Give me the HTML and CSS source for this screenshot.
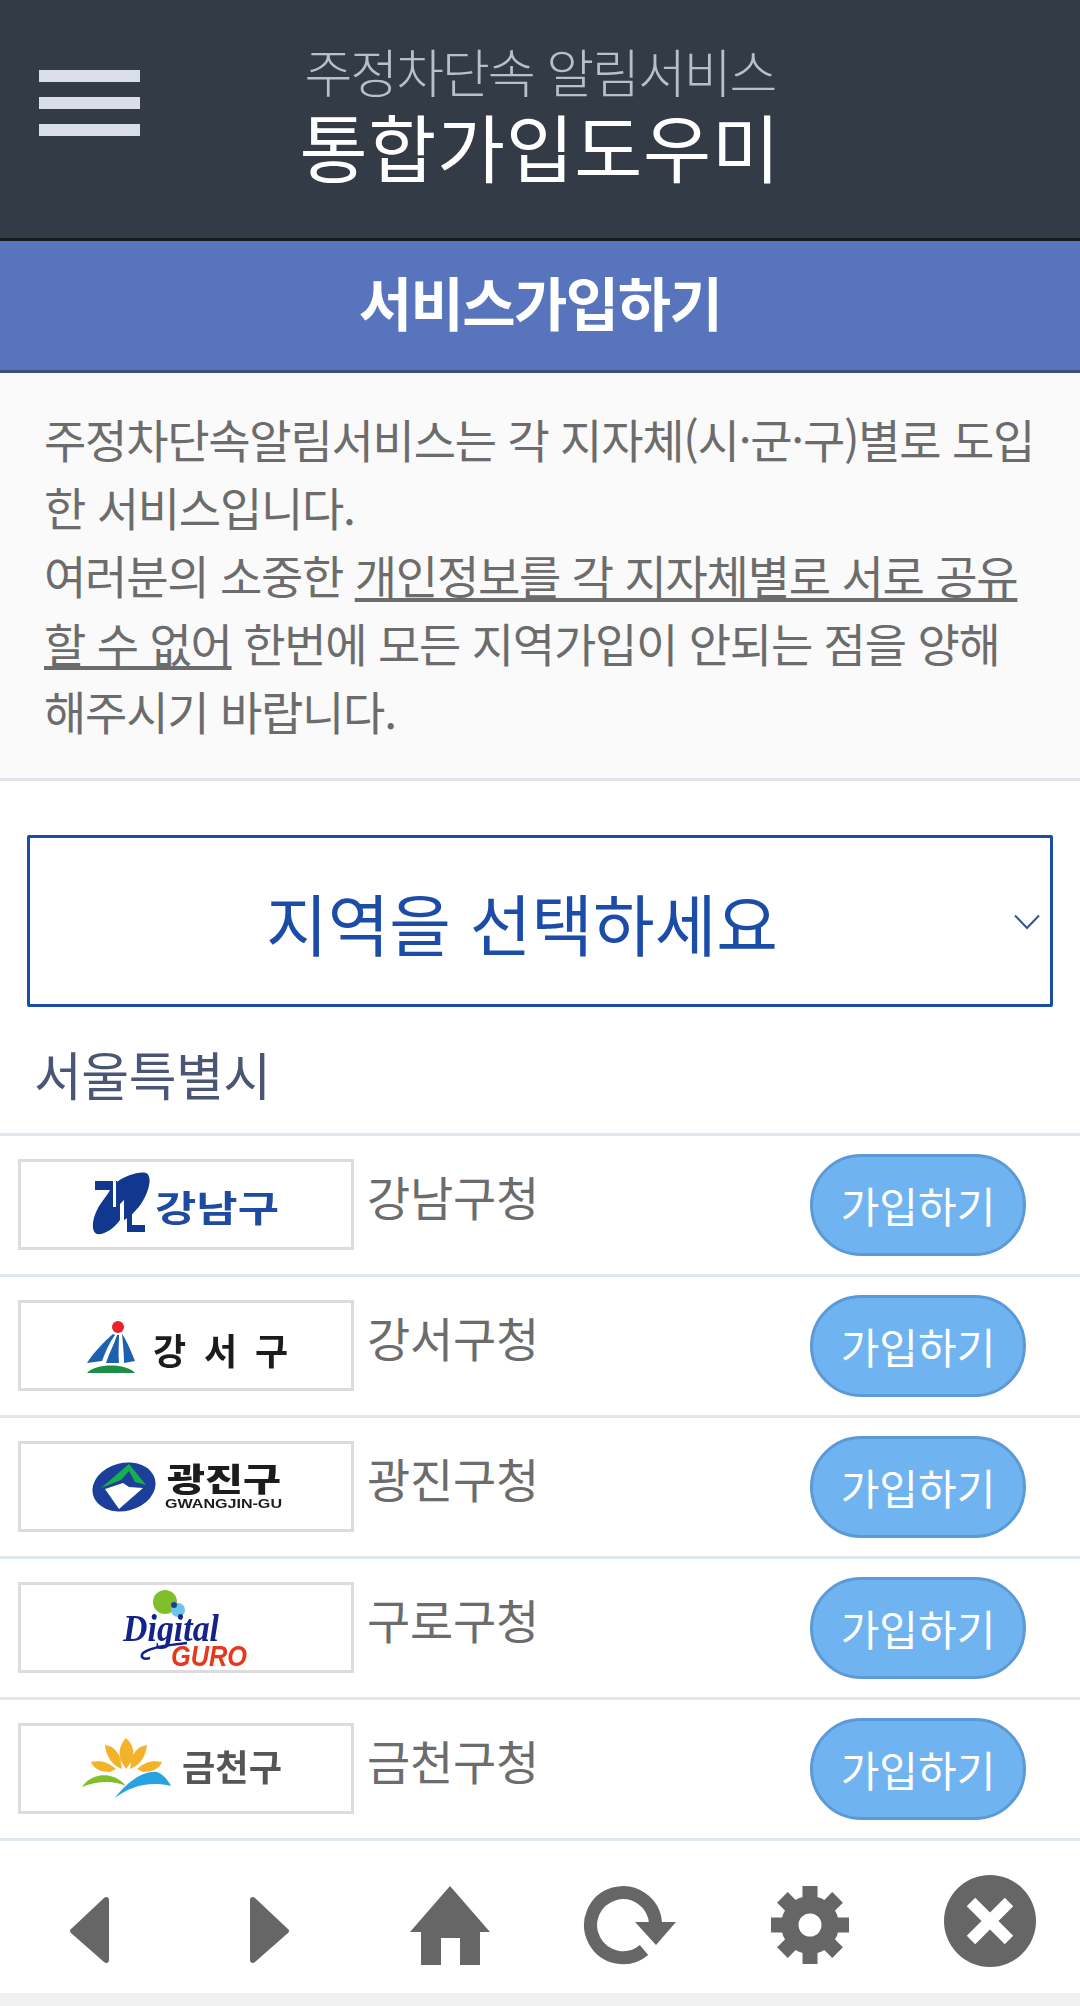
FILE: index.html
```html
<!DOCTYPE html>
<html lang="ko">
<head>
<meta charset="utf-8">
<title>통합가입도우미</title>
<link rel="stylesheet" href="styles.css">
</head>
<body>
<div class="page">
  <header class="top">
    <div class="burger"><i></i><i></i><i></i></div>
    <div class="brand">
      <div class="brand-sub">주정차단속 알림서비스</div>
      <div class="brand-main">통합가입도우미</div>
    </div>
  </header>
  <h1 class="bar">서비스가입하기</h1>
  <section class="intro">주정차단속알림서비스는 각 지자체(시·군·구)별로 도입한 서비스입니다.<br>여러분의 소중한 <u>개인정보를 각 지자체별로 서로 공유할 수 없어</u> 한번에 모든 지역가입이 안되는 점을 양해해주시기 바랍니다.</section>
  <div class="select">
    <span>지역을 선택하세요</span>
    <svg class="chev" viewBox="0 0 26 16"><path d="M1 1.500 13 14 25 1.500"/></svg>
  </div>
  <h2 class="region">서울특별시</h2>
  <ul class="list">
    <li class="row">
      <div class="logo"><svg viewBox="0 0 330 85">
        <path class="navy" d="M96 20C104 14 118 9 125 11 132 14 128 30 120 42 114 50 108 56 103 58V38L99 42V58C92 68 82 73 76 72 70 70 71 58 76 48 80 40 86 34 89 28H74V19H96Z"/>
        <path class="navy" d="M106 48h5v15h13v7h-18z"/>
        <path class="white" d="M92 19h3v26h-3z"/>
        <text class="lt navy-t" x="134" y="60" textLength="124" lengthAdjust="spacingAndGlyphs">강남구</text>
      </svg></div>
      <span class="name">강남구청</span><a class="join">가입하기</a>
    </li>
    <li class="row">
      <div class="logo"><svg viewBox="0 0 330 85">
        <circle class="red" cx="97" cy="24" r="6"/>
        <path class="blue" d="M92 31C84 38 72 50 66 60L81 58C84 50 88 40 94 32zM96 32C93 42 88 50 85 60H98C97 50 98 40 98 32zM101 31C102 42 103 50 103 60L114 58C110 48 106 38 101 31z"/>
        <path class="green" d="M66 70C74 60 106 60 114 70z"/>
        <text class="lt ink" x="132" y="62" textLength="135">강서구</text>
      </svg></div>
      <span class="name">강서구청</span><a class="join">가입하기</a>
    </li>
    <li class="row">
      <div class="logo"><svg viewBox="0 0 330 85">
        <ellipse class="navy2" cx="103" cy="43" rx="32" ry="24" transform="rotate(-14 103 43)"/>
        <path class="green2" d="M80 44 108 20 125 41 114 38 108 27 100 36z"/>
        <path class="white" d="M84 45 102 39 108 43 122 44 98 65z"/>
        <text class="lt ink small" x="146" y="47" textLength="114" lengthAdjust="spacingAndGlyphs">광진구</text>
        <text class="en ink" x="144" y="64" textLength="117" lengthAdjust="spacingAndGlyphs">GWANGJIN-GU</text>
      </svg></div>
      <span class="name">광진구청</span><a class="join">가입하기</a>
    </li>
    <li class="row">
      <div class="logo"><svg viewBox="0 0 330 85">
        <circle class="lime" cx="144" cy="17" r="12"/>
        <circle class="sky" cx="157" cy="25" r="7"/>
        <circle class="navy2" cx="153" cy="20" r="3"/>
        <text class="digital" x="102" y="56" textLength="96" lengthAdjust="spacingAndGlyphs">Digital</text>
        <path class="strokenavy" d="M166 58c-18 2-36 4-44 10-3 4 0 7 7 5"/>
        <text class="guro" x="150" y="81" textLength="76" lengthAdjust="spacingAndGlyphs">GURO</text>
      </svg></div>
      <span class="name">구로구청</span><a class="join">가입하기</a>
    </li>
    <li class="row">
      <div class="logo"><svg viewBox="0 0 330 85">
        <path class="sun" d="M105 12c7 6 9 15 6 23l-6 8-5-8c-3-8-1-17 5-23zM84 19c9 1 15 8 16 18l1 6c-9-3-16-12-17-24zM126 19c-1 12-8 21-17 24l1-6c1-10 7-17 16-18zM70 36c10-2 17 0 25 7l-6 3c-9 0-16-3-19-10zM141 36c-3 7-10 10-19 10l-6-3c8-7 15-9 25-7z"/>
        <path class="lime" d="M61 61C70 47 92 44 105 60 92 54 76 55 61 61z"/>
        <path class="sky2" d="M94 72C104 58 122 44 136 46 142 48 147 54 150 60 128 55 110 60 94 72z"/>
        <text class="lt gray" x="161" y="55" textLength="100" lengthAdjust="spacingAndGlyphs">금천구</text>
      </svg></div>
      <span class="name">금천구청</span><a class="join">가입하기</a>
    </li>
  </ul>
  <nav class="nav">
    <svg class="ico" viewBox="0 0 96 96"><path d="M28 57 62 25c2-2 5-1 5 2v60c0 3-3 4-5 2L29 60c-1-1-1-2-1-3z"/></svg>
    <svg class="ico" viewBox="0 0 96 96"><path d="M67 57 33 25c-2-2-5-1-5 2v60c0 3 3 4 5 2l33-29c1-1 1-2 1-3z"/></svg>
    <svg class="ico" viewBox="0 0 96 96"><path d="M48 13 88 59H78V92H58V65H39V92H19V59H8z"/></svg>
    <svg class="ico" viewBox="0 0 96 96"><path class="ring" d="M73.500 50A32.500 32.500 0 1 0 62 77"/><path d="M53 49H94L74 72z"/></svg>
    <svg class="ico" viewBox="0 0 96 96">
      <g transform="translate(48 52)">
        <circle r="29"/>
        <path d="M-7.500-39h15v78h-15z"/>
        <path d="M-7.500-39h15v78h-15z" transform="rotate(45)"/>
        <path d="M-7.500-39h15v78h-15z" transform="rotate(90)"/>
        <path d="M-7.500-39h15v78h-15z" transform="rotate(135)"/>
        <circle class="hole" r="11.500"/>
      </g>
    </svg>
    <svg class="ico" viewBox="0 0 96 96"><circle cx="48" cy="48" r="46"/><path class="x" d="M29 29 67 67M67 29 29 67"/></svg>
  </nav>
  <div class="foot"></div>
</div>
</body>
</html>
```
FILE: styles.css
```css
* { box-sizing: border-box; }
html, body { margin: 0; padding: 0; background: #fff; }
body { font-family: "Noto Sans CJK KR", "Noto Sans", sans-serif; }
.page { width: 1080px; height: 2006px; overflow: hidden; display: flex; flex-direction: column; }

.top { height: 241px; flex: none; background: #333b47; border-bottom: 3px solid #181a1d; display: flex; position: relative; justify-content: center; }
.burger { position: absolute; left: 39px; top: 70px; width: 101px; display: flex; flex-direction: column; gap: 15px; }
.burger i { display: block; height: 12px; background: #dadee8; }
.brand { text-align: center; padding-top: 36px; }
.brand-sub { font-size: 52px; line-height: 70px; font-weight: 300; color: #b9bfca; letter-spacing: -2px; }
.brand-main { font-size: 74px; line-height: 78px; font-weight: 400; color: #fff; letter-spacing: 0.6px; }

.bar { margin: 0; height: 132px; flex: none; background: #5774bc; border-bottom: 3px solid #3f5078; color: #fff; font-size: 58px; line-height: 120px; font-weight: 700; text-align: center; letter-spacing: -1.6px; }

.intro { flex: none; height: 408px; background: #fafafa; border-bottom: 3px solid #e0e4ee; padding: 31px 44px 0 44px; font-size: 46px; line-height: 68px; color: #6c6c6c; letter-spacing: -1.25px; font-weight: 400; }
.intro u { text-underline-offset: 4px; }

.select { flex: none; margin: 54px 27px 0; height: 172px; border: 3px solid #1a4ca8; border-radius: 2px; position: relative; display: flex; align-items: center; justify-content: center; color: #1a4ca8; font-size: 67px; padding-right: 36px; }
.chev { position: absolute; right: 10px; top: 76px; width: 26px; height: 16px; fill: none; stroke: #2f5599; stroke-width: 2; }

.region { margin: 0; flex: none; height: 126px; padding: 32px 0 0 34px; font-size: 52px; line-height: 70px; font-weight: 400; color: #4b5675; letter-spacing: -0.5px; }

.list { list-style: none; margin: 0; padding: 0; flex: none; }
.row { height: 141px; border-top: 3px solid #e0e8ef; display: flex; align-items: flex-start; padding: 23px 0 0 18px; }
.logo { width: 336px; height: 91px; border: 3px solid #dcdcdc; background: #fff; flex: none; }
.logo svg { display: block; width: 330px; height: 85px; filter: blur(.6px); overflow: visible; }
.name { margin-left: 13px; margin-top: 2px; font-size: 47px; line-height: 70px; color: #6c6c6c; font-weight: 400; letter-spacing: -.2px; }
.join { margin-left: auto; margin-right: 54px; margin-top: -5px; width: 216px; height: 102px; border-radius: 51px; border: 3px solid #5b9ad6; background: #6fb4f0; color: #fff; font-size: 42px; line-height: 96px; text-align: center; }

.lt { font-family: "Noto Sans CJK KR", sans-serif; font-size: 36px; font-weight: 700; }
.lt.small { font-size: 32px; font-weight: 900; }
.en { font-family: "Liberation Sans", sans-serif; font-size: 13px; font-weight: 700; }
.navy { fill: #12378f; }
.navy-t { fill: #1e4aa2; }
.navy2 { fill: #1c3f9b; }
.white { fill: #fff; }
.red { fill: #e8212b; }
.blue { fill: #1d5fb0; }
.green { fill: #1f8f45; }
.green2 { fill: #18b04e; }
.ink { fill: #1c1c1c; }
.gray { fill: #555; }
.lime { fill: #7fbf2a; }
.sky { fill: #6cc4e8; }
.sky2 { fill: #27a3e0; }
.sun { fill: #f4b12a; }
.digital { font-family: "Liberation Serif", serif; font-style: italic; font-weight: 700; font-size: 38px; fill: #14238a; }
.guro { font-family: "Liberation Sans", sans-serif; font-style: italic; font-weight: 700; font-size: 29px; fill: #e8381c; }
.strokenavy { fill: none; stroke: #14238a; stroke-width: 2.500; }

.nav { flex: none; height: 155px; border-top: 3px solid #e0e8ef; background: #fff; display: grid; grid-template-columns: repeat(6, 180px); justify-items: center; padding-top: 32px; }
.ico { width: 96px; height: 96px; fill: #666; display: block; }
.ring { fill: none; stroke: #666; stroke-width: 13; }
.hole { fill: #fff; }
.x { fill: none; stroke: #fff; stroke-width: 12; }
.foot { flex: 1; background: #f1f1f1; }
```
